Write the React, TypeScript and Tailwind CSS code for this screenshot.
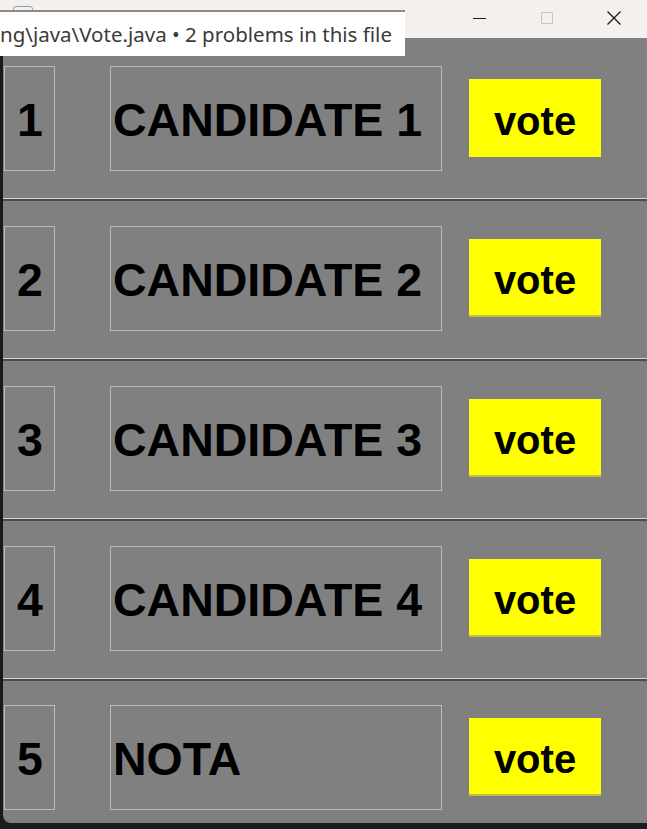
import React from "react";

const rows = [
  { num: "1", name: "CANDIDATE 1", pad: "pt-[28px]", h: "h-[160px]", line: false },
  { num: "2", name: "CANDIDATE 2", pad: "pt-[25px]", h: "h-[157px]", line: true },
  { num: "3", name: "CANDIDATE 3", pad: "pt-[25px]", h: "h-[157px]", line: true },
  { num: "4", name: "CANDIDATE 4", pad: "pt-[25px]", h: "h-[157px]", line: true },
  { num: "5", name: "NOTA", pad: "pt-[24px]", h: "h-[142px]", line: true },
];

const big = "font-['Liberation_Sans',Arial,sans-serif] font-bold text-black";

function Row({ r, last }: { r: (typeof rows)[number]; last: boolean }) {
  return (
    <>
      <div className={`${r.h} ${r.pad} flex items-start shrink-0`}>
        <div className={`ml-[1px] w-[51px] h-[105px] border border-[#b0c0d0] flex items-center justify-center pt-[4px] pl-[1px] ${big} text-[46.5px] leading-none`}>
          {r.num}
        </div>
        <div className={`ml-[55px] w-[332px] h-[105px] border border-[#b0c0d0] flex items-center pl-[2px] pt-[4px] ${big} text-[46.5px] leading-none`}>
          {r.name}
        </div>
        <button
          className={`ml-[27px] mt-[13px] w-[132px] h-[78px] bg-[#ffff00] flex items-center justify-center pt-[5px] ${big} text-[40px] leading-none ${
            r.line ? "border-b-2 border-[#c2c23a]" : ""
          }`}
        >
          vote
        </button>
      </div>
      {!last && (
        <div className="shrink-0">
          <div className="h-[1px] bg-[#d6d6d6]" />
          <div className="h-[2px] bg-[#4a4a4a]" />
        </div>
      )}
    </>
  );
}

export default function App() {
  return (
    <div className="relative w-[647px] h-[829px] overflow-hidden bg-[#1c1c1c]">
      {/* title bar */}
      <div className="relative h-[38px] bg-[#f3f0ed]">
        <div className="absolute left-[13px] top-[6px] w-[20px] h-[14px] rounded-[3px] border border-[#9a9a9a]" />
        <div className="absolute left-[473px] top-[18px] w-[13px] h-[1px] bg-[#1a1a1a]" />
        <div className="absolute left-[541px] top-[12px] w-[12px] h-[12px] border border-[#c4c4c4] rounded-[1px]" />
        <svg className="absolute left-[606px] top-[10px]" width="16" height="16" viewBox="0 0 16 16">
          <path d="M1.5 1.5 L14.5 14.5 M14.5 1.5 L1.5 14.5" stroke="#1a1a1a" strokeWidth="1.3" fill="none" />
        </svg>
      </div>

      {/* window body */}
      <div className="flex h-[785px]">
        <div className="w-[3px] bg-[#1a1a1a] shrink-0" />
        <div className="flex-1 bg-[#808080] rounded-bl-[8px] flex flex-col">
          {rows.map((r, i) => (
            <Row key={r.num} r={r} last={i === rows.length - 1} />
          ))}
        </div>
      </div>

      {/* tooltip */}
      <div className="absolute left-0 top-[10px] w-[405px] h-[46px] bg-white border-t-2 border-[#8a8a8a] flex items-center">
        <span className="whitespace-nowrap text-[20.5px] text-[#3a3a3a] font-['Noto_Sans',sans-serif] leading-none">
          ng\java\Vote.java • 2 problems in this file
        </span>
      </div>
    </div>
  );
}
